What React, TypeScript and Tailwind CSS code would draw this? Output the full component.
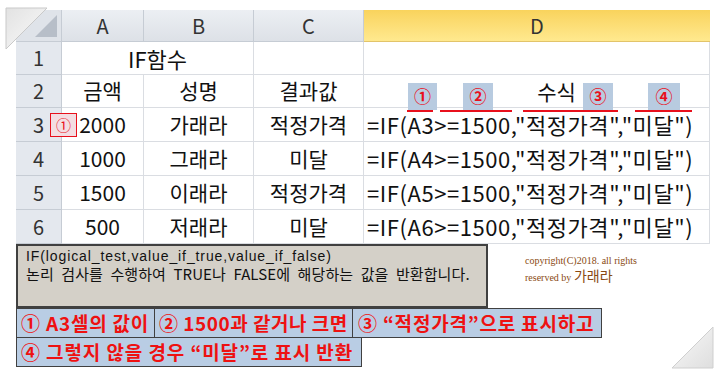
import React from 'react'

const KR = { fontFamily: '"Noto Sans CJK KR", "Noto Sans", sans-serif' }

interface Row {
  n: string
  amount: string
  name: string
  result: string
  cell: string
}

const rows: Row[] = [
  { n: '3', amount: '2000', name: '가래라', result: '적정가격', cell: 'A3' },
  { n: '4', amount: '1000', name: '그래라', result: '미달', cell: 'A4' },
  { n: '5', amount: '1500', name: '이래라', result: '적정가격', cell: 'A5' },
  { n: '6', amount: '500', name: '저래라', result: '미달', cell: 'A6' },
]

const cols = 'grid grid-cols-[46px_82px_110px_110px_346px]'
const rowHead = 'flex items-center justify-center bg-[#e4e8ee] border-r border-b border-[#c6ccd4] text-[#333] text-[20px]'
const cell = 'flex items-center justify-center border-r border-b border-[#dadde2] text-[#111] text-[21px] whitespace-nowrap overflow-hidden'

export default function App() {
  return (
    <div className="relative w-[720px] h-[375px] bg-white overflow-hidden" style={KR}>
      <div className="relative ml-[16px] pt-[10px] w-[694px]">
        {/* column headers */}
        <div className={`${cols} h-[32px]`}>
          <div className="relative bg-[#dfe3e9] border-r border-b border-[#c6ccd4]">
            <svg className="absolute right-[4px] bottom-[4px]" width="22" height="22" viewBox="0 0 22 22">
              <polygon points="22,0 22,22 0,22" fill="#b7bec8" />
            </svg>
          </div>
          {['A', 'B', 'C'].map((c) => (
            <div key={c} className="flex items-center justify-center bg-linear-to-b from-[#eceff3] to-[#dde1e7] border-r border-b border-[#c6ccd4] text-[#333] text-[20px]">
              {c}
            </div>
          ))}
          <div className="flex items-center justify-center bg-linear-to-b from-[#f9d35c] to-[#ffe98e] border-b border-[#e2c46a] text-[#333] text-[20px]">
            D
          </div>
        </div>

        {/* row 1 */}
        <div className={`${cols} h-[33px]`}>
          <div className={rowHead}>1</div>
          <div className={`${cell} col-span-2 text-[22px]`}>IF함수</div>
          <div className={cell}></div>
          <div className={cell}></div>
        </div>

        {/* row 2 */}
        <div className={`${cols} h-[33px]`}>
          <div className={rowHead}>2</div>
          <div className={cell}>금액</div>
          <div className={cell}>성명</div>
          <div className={cell}>결과값</div>
          <div className={`${cell} pl-[40px] pt-[2px]`}>수식</div>
        </div>

        {rows.map((r) => (
          <div key={r.n} className={`${cols} h-[34px]`}>
            <div className={rowHead}>{r.n}</div>
            <div className={cell}>{r.amount}</div>
            <div className={cell}>{r.name}</div>
            <div className={cell}>{r.result}</div>
            <div className={`${cell} justify-start pl-[3px] text-[22px] tracking-[0.55px]`}>
              ={'IF('}{r.cell}{'>=1500,"적정가격","미달")'}
            </div>
          </div>
        ))}

        {/* markers over row 2 */}
        {[
          { l: 392, w: 29, t: '①' },
          { l: 447, w: 30, t: '②' },
          { l: 567, w: 30, t: '③' },
          { l: 632, w: 32, t: '④' },
        ].map((m) => (
          <div
            key={m.t}
            className="absolute top-[83px] h-[27px] bg-[#b8cbe0] flex items-end justify-center pb-[2px] text-[#e8101c] text-[17px] font-bold"
            style={{ left: m.l, width: m.w }}
          >
            {m.t}
          </div>
        ))}
        {[
          { l: 391, w: 26 },
          { l: 424, w: 72 },
          { l: 507, w: 95 },
          { l: 619, w: 57 },
        ].map((u) => (
          <div key={u.l} className="absolute top-[110px] h-[2px] bg-[#e8101c]" style={{ left: u.l, width: u.w }} />
        ))}
        <div className="absolute left-[34px] top-[113px] w-[27px] h-[24px] border border-[#e8101c] bg-[#f3dde2] flex items-center justify-center text-[#e8101c] text-[15px]">
          ①
        </div>
      </div>

      {/* function tip + copyright */}
      <div className="ml-[16px] flex">
        <div className="w-[472px] h-[64px] bg-[#d4d0c8] border-2 border-[#404040] pl-[8px] pt-[1px] leading-[18px] text-[#111]">
          <div style={{ fontFamily: '"Liberation Sans", sans-serif' }} className="text-[14px] tracking-[0.9px]">IF(logical_test,value_if_true,value_if_false)</div>
          <div style={KR} className="text-[15px] tracking-[0.1px] [word-spacing:4px] whitespace-nowrap">논리 검사를 수행하여 TRUE나 FALSE에 해당하는 값을 반환합니다.</div>
        </div>
        <div className="ml-[37px] pt-[9px] text-[#8a4a12] leading-[15px]">
          <div className="text-[10px]" style={{ fontFamily: '"Liberation Serif", serif' }}>copyright(C)2018. all rights</div>
          <div className="text-[10px]" style={{ fontFamily: '"Liberation Serif", serif' }}>
            reserved by <span className="text-[14px]" style={KR}>가래라</span>
          </div>
        </div>
      </div>

      {/* annotation labels */}
      <div className="ml-[16px] flex text-[#ee1111] text-[19px] font-bold tracking-[0.8px] whitespace-nowrap">
        <div className="w-[139px] h-[30px] bg-[#b9cde4] border border-[#404040] flex items-center pl-[4px]">① A3셀의 값이</div>
        <div className="w-[198px] h-[30px] bg-[#b9cde4] border border-[#404040] border-l-0 flex items-center pl-[4px] tracking-[0.5px]">② 1500과 같거나 크면</div>
        <div className="w-[249px] h-[30px] bg-[#b9cde4] border border-[#404040] border-l-0 flex items-center pl-[5px]">③ “적정가격”으로 표시하고</div>
      </div>
      <div className="ml-[16px] flex text-[#ee1111] text-[19px] font-bold tracking-[0.9px] whitespace-nowrap">
        <div className="w-[346px] h-[29px] bg-[#b9cde4] border border-t-0 border-[#404040] flex items-center pl-[4px]">④ 그렇지 않을 경우 “미달”로 표시 반환</div>
      </div>

      {/* page curls */}
      <svg className="absolute left-[5px] top-[7px]" width="44" height="44" viewBox="0 0 44 44">
        <defs>
          <linearGradient id="tl" x1="0" y1="0" x2="1" y2="1">
            <stop offset="0" stopColor="#e2e2e2" />
            <stop offset="1" stopColor="#fbfbfb" />
          </linearGradient>
        </defs>
        <polygon points="1,1 42,1 1,42" fill="url(#tl)" stroke="#c9c9c9" strokeWidth="1" />
      </svg>
      <svg className="absolute left-[671px] top-[326px]" width="44" height="44" viewBox="0 0 44 44">
        <defs>
          <linearGradient id="br" x1="0" y1="0" x2="1" y2="1">
            <stop offset="0" stopColor="#fafafa" />
            <stop offset="1" stopColor="#dedede" />
          </linearGradient>
        </defs>
        <polygon points="42,1 42,42 1,42" fill="url(#br)" stroke="#cfcfcf" strokeWidth="1" />
      </svg>
    </div>
  )
}
